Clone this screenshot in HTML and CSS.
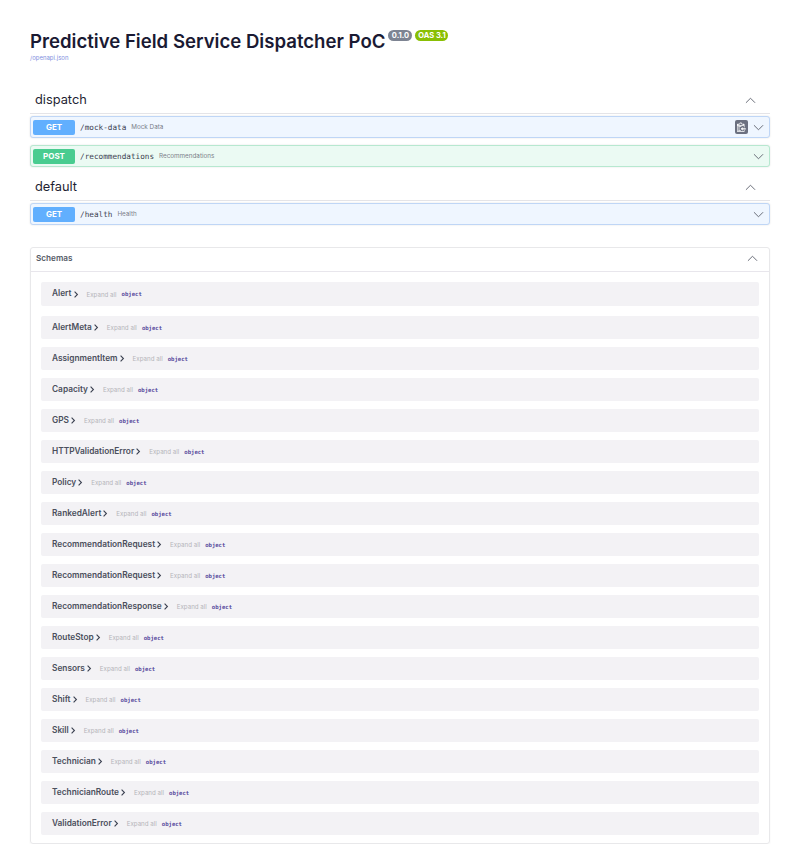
FILE: index.html
```html
<!DOCTYPE html>
<html lang="en">
<head>
    <meta charset="UTF-8">
    <title>Predictive Field Service Dispatcher PoC - Swagger UI</title>
    <link rel="stylesheet" href="styles.css">
</head>
<body>
    <div class="wrapper">
        <div class="info">
            <div class="title-row">
                <h1>Predictive Field Service Dispatcher PoC</h1>
                <span class="version">0.1.0</span>
                <span class="oas">OAS 3.1</span>
            </div>
            <a class="spec-link" href="#">/openapi.json</a>
        </div>

        <div class="tag">
            <h3>dispatch</h3>
            <svg class="arrow" viewBox="0 0 20 20"><path d="M3 13.5 10 6.5l7 7"/></svg>
        </div>
        <div class="opblock get">
            <span class="method">GET</span>
            <span class="path">/mock-data</span>
            <span class="summary">Mock Data</span>
            <span class="lock">
                <svg viewBox="0 0 16 16"><path d="M2 12h4v1H2v-1zm5-6H2v1h5V6zm2 3V7l-3 3 3 3v-2h5V9H9zM4.5 8H2v1h2.5V8zM2 11h2.5v-1H2v1zm9 1h1v2c-.02.28-.11.52-.3.7-.19.18-.42.28-.7.3H1c-.55 0-1-.45-1-1V3c0-.55.45-1 1-1h3c0-1.11.89-2 2-2 1.11 0 2 .89 2 2h3c.55 0 1 .45 1 1v5h-1V5H1v9h10v-2zM2 4h8c0-.55-.45-1-1-1H8c-.55 0-1-.45-1-1s-.45-1-1-1-1 .45-1 1-.45 1-1 1H3c-.55 0-1 .45-1 1z"/></svg>
            </span>
            <svg class="arrow small" viewBox="0 0 20 20"><path d="M3 6.5l7 7 7-7"/></svg>
        </div>
        <div class="opblock post">
            <span class="method">POST</span>
            <span class="path">/recommendations</span>
            <span class="summary">Recommendations</span>
            <svg class="arrow small" viewBox="0 0 20 20"><path d="M3 6.5l7 7 7-7"/></svg>
        </div>

        <div class="tag">
            <h3>default</h3>
            <svg class="arrow" viewBox="0 0 20 20"><path d="M3 13.5 10 6.5l7 7"/></svg>
        </div>
        <div class="opblock get">
            <span class="method">GET</span>
            <span class="path">/health</span>
            <span class="summary">Health</span>
            <svg class="arrow small" viewBox="0 0 20 20"><path d="M3 6.5l7 7 7-7"/></svg>
        </div>

        <section class="schemas">
            <div class="schemas-head">
                <h4>Schemas</h4>
                <svg class="arrow" viewBox="0 0 20 20"><path d="M3 13.5 10 6.5l7 7"/></svg>
            </div>
            <div class="schema-list" id="schemaList">
                <div class="model first"><b>Alert</b><svg class="chev" viewBox="0 0 8 10"><path d="M2 1l4 4-4 4"/></svg><span class="expand">Expand all</span><code>object</code></div>
                <div class="model second"><b>AlertMeta</b><svg class="chev" viewBox="0 0 8 10"><path d="M2 1l4 4-4 4"/></svg><span class="expand">Expand all</span><code>object</code></div>
                <div class="model"><b>AssignmentItem</b><svg class="chev" viewBox="0 0 8 10"><path d="M2 1l4 4-4 4"/></svg><span class="expand">Expand all</span><code>object</code></div>
                <div class="model"><b>Capacity</b><svg class="chev" viewBox="0 0 8 10"><path d="M2 1l4 4-4 4"/></svg><span class="expand">Expand all</span><code>object</code></div>
                <div class="model"><b>GPS</b><svg class="chev" viewBox="0 0 8 10"><path d="M2 1l4 4-4 4"/></svg><span class="expand">Expand all</span><code>object</code></div>
                <div class="model"><b>HTTPValidationError</b><svg class="chev" viewBox="0 0 8 10"><path d="M2 1l4 4-4 4"/></svg><span class="expand">Expand all</span><code>object</code></div>
                <div class="model"><b>Policy</b><svg class="chev" viewBox="0 0 8 10"><path d="M2 1l4 4-4 4"/></svg><span class="expand">Expand all</span><code>object</code></div>
                <div class="model"><b>RankedAlert</b><svg class="chev" viewBox="0 0 8 10"><path d="M2 1l4 4-4 4"/></svg><span class="expand">Expand all</span><code>object</code></div>
                <div class="model"><b>RecommendationRequest</b><svg class="chev" viewBox="0 0 8 10"><path d="M2 1l4 4-4 4"/></svg><span class="expand">Expand all</span><code>object</code></div>
                <div class="model"><b>RecommendationRequest</b><svg class="chev" viewBox="0 0 8 10"><path d="M2 1l4 4-4 4"/></svg><span class="expand">Expand all</span><code>object</code></div>
                <div class="model"><b>RecommendationResponse</b><svg class="chev" viewBox="0 0 8 10"><path d="M2 1l4 4-4 4"/></svg><span class="expand">Expand all</span><code>object</code></div>
                <div class="model"><b>RouteStop</b><svg class="chev" viewBox="0 0 8 10"><path d="M2 1l4 4-4 4"/></svg><span class="expand">Expand all</span><code>object</code></div>
                <div class="model"><b>Sensors</b><svg class="chev" viewBox="0 0 8 10"><path d="M2 1l4 4-4 4"/></svg><span class="expand">Expand all</span><code>object</code></div>
                <div class="model"><b>Shift</b><svg class="chev" viewBox="0 0 8 10"><path d="M2 1l4 4-4 4"/></svg><span class="expand">Expand all</span><code>object</code></div>
                <div class="model"><b>Skill</b><svg class="chev" viewBox="0 0 8 10"><path d="M2 1l4 4-4 4"/></svg><span class="expand">Expand all</span><code>object</code></div>
                <div class="model"><b>Technician</b><svg class="chev" viewBox="0 0 8 10"><path d="M2 1l4 4-4 4"/></svg><span class="expand">Expand all</span><code>object</code></div>
                <div class="model"><b>TechnicianRoute</b><svg class="chev" viewBox="0 0 8 10"><path d="M2 1l4 4-4 4"/></svg><span class="expand">Expand all</span><code>object</code></div>
                <div class="model"><b>ValidationError</b><svg class="chev" viewBox="0 0 8 10"><path d="M2 1l4 4-4 4"/></svg><span class="expand">Expand all</span><code>object</code></div>
            </div>
        </section>
    </div>
</body>
</html>
```

FILE: styles.css
```css
* {
    box-sizing: border-box;
}
body {
    margin: 0;
    background-color: #fff;
    font-family: Inter, "Open Sans", sans-serif;
    color: #3b4151;
}
.wrapper {
    padding: 0 30px;
}
.info {
    padding-top: 30px;
    height: 89px;
}
.title-row {
    display: flex;
    align-items: flex-start;
}
h1 {
    margin: 0 0 1px;
    font-size: 18.6px;
    line-height: 22px;
    font-weight: 600;
    color: #1a1a33;
    white-space: nowrap;
}
.version, .oas {
    height: 11px;
    border-radius: 6px;
    font-size: 7.5px;
    line-height: 11px;
    font-weight: 700;
    color: #fff;
    text-align: center;
}
.version {
    width: 24px;
    margin-left: 3px;
    background-color: #7d8492;
}
.oas {
    width: 33px;
    margin-left: 3px;
    background-color: #89bf04;
}
.spec-link {
    display: block;
    margin-top: 1px;
    font-size: 6px;
    line-height: 8px;
    color: #7f90e0;
    text-decoration: none;
}
.tag {
    display: flex;
    align-items: flex-start;
    justify-content: space-between;
    height: 25px;
    padding: 0 13px 0 5px;
    margin-bottom: 2px;
    border-bottom: 1px solid #e4e4e8;
}
.opblock + .tag {
    margin-top: 9px;
}
.tag h3 {
    margin: 0;
    font-size: 12.8px;
    line-height: 22px;
    font-weight: 400;
    color: #1f1f33;
}
.tag .arrow {
    margin-top: 5px;
}
.arrow {
    width: 13px;
    height: 13px;
    fill: none;
    stroke: #666a75;
    stroke-width: 1.5;
}
.opblock {
    display: flex;
    align-items: center;
    height: 22px;
    margin-bottom: 7px;
    padding: 0 4px 0 2px;
    border: 1px solid;
    border-radius: 3px;
    box-shadow: 0 0 2px rgba(0, 0, 0, 0.12);
}
.opblock.get {
    background-color: #eff6ff;
    border-color: #bfd6f6;
}
.opblock.post {
    background-color: #ebfaf3;
    border-color: #b7e8d0;
}
.method {
    width: 42px;
    height: 15px;
    border-radius: 2px;
    font-size: 8px;
    line-height: 15px;
    font-weight: 700;
    color: #fff;
    text-align: center;
}
.get .method {
    background-color: #61affe;
}
.post .method {
    background-color: #49cc90;
}
.path {
    margin-left: 5px;
    font-family: "DejaVu Sans Mono", monospace;
    font-size: 7.7px;
    color: #3b4151;
}
.summary {
    margin-left: 5px;
    font-size: 6.3px;
    color: #7b8089;
}
.lock {
    display: flex;
    align-items: center;
    justify-content: center;
    margin-left: auto;
    margin-right: 4px;
    width: 13px;
    height: 14px;
    border-radius: 2px;
    background-color: #6b7080;
}
.lock svg {
    display: block;
    width: 10px;
    height: 11px;
    fill: #fff;
}
.arrow.small {
    margin-left: auto;
}
.lock + .arrow.small {
    margin-left: 0;
}
.schemas {
    margin-top: 22px;
    border: 1px solid #e8e8ea;
    border-radius: 3px;
    box-shadow: 0 1px 2px rgba(0, 0, 0, 0.05);
}
.schemas-head {
    display: flex;
    align-items: center;
    justify-content: space-between;
    height: 24px;
    padding: 0 10px 3px 5px;
    border-bottom: 1px solid #e8e6ec;
}
.schemas-head h4 {
    margin: 0;
    font-size: 8.2px;
    font-weight: 600;
    color: #555a66;
}
.schema-list {
    display: flex;
    flex-direction: column;
    gap: 8px;
    padding: 10px 10px 8px;
}
.model {
    display: flex;
    align-items: center;
    height: 23px;
    padding: 0 11px;
    border-radius: 2px;
    background-color: #f3f2f5;
    font-size: 8.3px;
}
.model.first {
    height: 24px;
}
.model.second {
    margin-top: 2px;
}
.model b {
    margin-bottom: 2px;
    font-weight: 600;
    color: #4b4f5c;
}
.chev {
    width: 6px;
    height: 7px;
    margin-left: 1px;
    fill: none;
    stroke: #3b4151;
    stroke-width: 1.6;
}
.expand {
    margin-left: 8px;
    font-size: 6.2px;
    color: #b5b5ba;
}
.model code {
    margin-left: 5px;
    font-family: "DejaVu Sans Mono", monospace;
    font-size: 5.6px;
    font-weight: 700;
    color: #55479b;
}
```
